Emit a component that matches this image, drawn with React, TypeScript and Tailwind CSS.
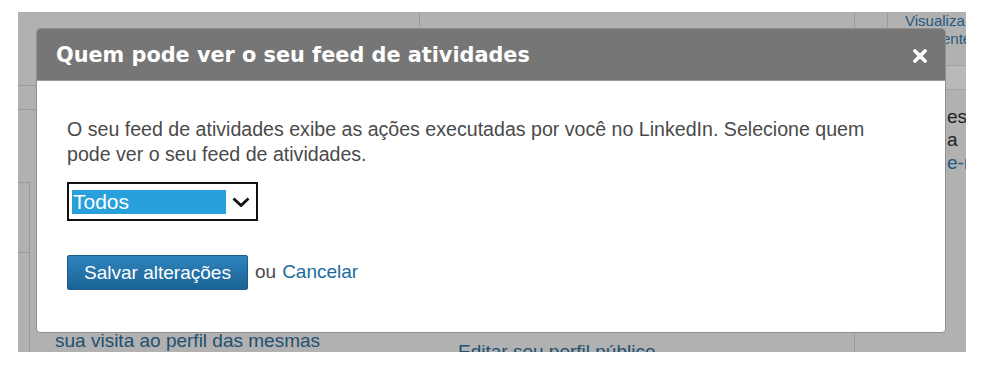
import React from "react";

const ARIAL = { fontFamily: '"Liberation Sans", Arial, sans-serif' };

export default function App() {
  return (
    <div className="w-[984px] h-[373px] bg-white pt-[12px] pl-[18px]" style={ARIAL}>
      <div className="relative w-[948px] h-[340px] bg-[#b1b1b1] overflow-hidden flex">
        {/* col 1 : 18..36 */}
        <div className="w-[18px] flex flex-col shrink-0">
          <div className="h-[73px]" />
          <div className="h-[25px] border-y border-[#999]" />
          <div className="h-[72px]" />
          <div className="w-[12px] h-[71px] border-t border-r border-b border-[#999]" />
          <div className="w-[12px] flex-1 border-r border-[#999]" />
        </div>
        {/* col 2 : 36..420 */}
        <div className="w-[384px] flex flex-col shrink-0">
          <div className="h-[16px] border-r border-[#999]" />
          <div className="h-[303px] shrink-0" />
          <div className="pl-[19px] text-[19px] leading-[22px] text-[#22506f] whitespace-nowrap">
            sua visita ao perfil das mesmas
          </div>
        </div>
        {/* col 3 : 420..855 */}
        <div className="w-[435px] flex flex-col shrink-0 border-r border-[#999]">
          <div className="h-[329px] shrink-0" />
          <div className="pl-[38px] text-[19px] leading-[22px] text-[#22506f] whitespace-nowrap">
            Editar seu perfil público
          </div>
        </div>
        {/* col 4 : 855..888 */}
        <div className="w-[33px] shrink-0">
          <div className="h-[16px] border-r border-[#999]" />
        </div>
        {/* col 5 : 888..966 */}
        <div className="w-[78px] shrink-0 flex flex-col">
          <div className="pl-[17px] text-[15px] leading-[18px] text-[#245a80] whitespace-nowrap">
            Visualiza
          </div>
          <div className="pl-[54px] text-[15px] leading-[18px] text-[#245a80] whitespace-nowrap">
            ente
          </div>
          <div className="h-[17px] shrink-0" />
          <div className="h-[25px] shrink-0 border-y border-[#a2a2a2] bg-[#b9b9b9]" />
          <div className="pl-[59px] pt-[15px] text-[19px] leading-[23px] text-[#222] whitespace-nowrap">
            <div>es</div>
            <div>a</div>
            <div className="text-[#245a80]">e-n</div>
          </div>
        </div>

        {/* modal */}
        <div className="absolute left-[18px] top-[16px] w-[910px] h-[305px] rounded-[4px] overflow-hidden bg-white border border-[#8f8f8f] flex flex-col">
          <div className="h-[52px] shrink-0 bg-[#767676] border-b border-[#9c9c9c] flex items-center justify-between pl-[19px] pr-[18px] pt-[2px]">
            <div
              className="text-white font-bold text-[20.8px] leading-none"
              style={{ fontFamily: '"DejaVu Sans", Verdana, sans-serif' }}
            >
              Quem pode ver o seu feed de atividades
            </div>
            <svg width="14" height="14" viewBox="0 0 14 14">
              <path d="M2 2 L12 12 M12 2 L2 12" stroke="white" strokeWidth="3.6" strokeLinecap="square" />
            </svg>
          </div>
          <div className="pl-[30px] pt-[36px] flex flex-col items-start">
            <p className="w-[820px] text-[19.6px] leading-[25px] text-[#4a4a4a]">
              O seu feed de atividades exibe as ações executadas por você no LinkedIn. Selecione quem pode ver o seu feed de atividades.
            </p>
            <div className="mt-[15px] w-[191px] h-[39px] border-2 border-[#111] bg-white flex items-center pl-[3px] pr-[6px]">
              <div className="w-[154px] h-[24px] bg-[#28a0dc] text-white text-[21px] leading-[24px] pl-[1px]">
                Todos
              </div>
              <div className="flex-1 flex justify-end">
                <svg width="18" height="10" viewBox="0 0 18 10">
                  <path d="M1.5 1.5 L9 8.5 L16.5 1.5" fill="none" stroke="#111" strokeWidth="2.8" />
                </svg>
              </div>
            </div>
            <div className="mt-[34px] flex items-center">
              <button className="w-[181px] h-[35px] rounded-[2px] border border-[#1b5c89] bg-gradient-to-b from-[#2f84bd] to-[#1a6396] text-white text-[19px] leading-none">
                Salvar alterações
              </button>
              <span className="ml-[7px] text-[19px] text-[#4a4a4a]">ou</span>
              <span className="ml-[6px] text-[19px] text-[#1b6b9c]">Cancelar</span>
            </div>
          </div>
        </div>
      </div>
    </div>
  );
}
